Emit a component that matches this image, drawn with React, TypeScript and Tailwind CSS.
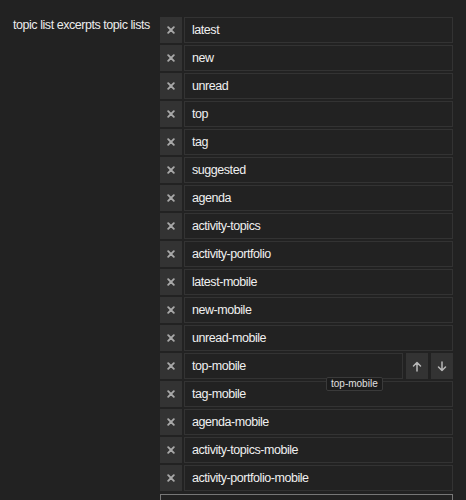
import React from "react";

const items = [
  "latest",
  "new",
  "unread",
  "top",
  "tag",
  "suggested",
  "agenda",
  "activity-topics",
  "activity-portfolio",
  "latest-mobile",
  "new-mobile",
  "unread-mobile",
  "top-mobile",
  "tag-mobile",
  "agenda-mobile",
  "activity-topics-mobile",
  "activity-portfolio-mobile",
];

function XIcon() {
  return (
    <svg width="8" height="8" viewBox="0 0 8 8">
      <path d="M1.2 1.2 L6.8 6.8 M6.8 1.2 L1.2 6.8" stroke="#a8a8a8" strokeWidth="1.9" strokeLinecap="round" />
    </svg>
  );
}

function Arrow({ up }: { up: boolean }) {
  return (
    <svg width="10" height="11" viewBox="0 0 10 11">
      {up ? (
        <path d="M5 10 V1.5 M1.5 5 L5 1.5 L8.5 5" stroke="#b8b8b8" strokeWidth="1.5" fill="none" strokeLinecap="round" strokeLinejoin="round" />
      ) : (
        <path d="M5 1 V9.5 M1.5 6 L5 9.5 L8.5 6" stroke="#b8b8b8" strokeWidth="1.5" fill="none" strokeLinecap="round" strokeLinejoin="round" />
      )}
    </svg>
  );
}

export default function App() {
  return (
    <div
      className="w-[466px] h-[500px] overflow-hidden bg-[#222222] text-[#dddddd] flex pt-[17px] pl-[13px] pr-[13px]"
      style={{ fontFamily: '"Liberation Sans", Arial, sans-serif' }}
    >
      <div className="w-[147px] shrink-0 text-[12.5px] leading-[15px] tracking-[-0.45px] whitespace-nowrap pt-[1px] text-[#ececec]">
        topic list excerpts topic lists
      </div>
      <div className="flex-1 flex flex-col gap-[2px]">
        {items.map((it) => (
          <div key={it} className="relative flex gap-[2px] h-[26px]">
            <div className="w-[22px] h-[26px] bg-[#333333] flex items-center justify-center shrink-0">
              <XIcon />
            </div>
            <div className="flex-1 h-[26px] border border-[#333333] bg-[#222222] flex items-center pl-[7px] text-[12.5px] tracking-[-0.45px] text-[#f0f0f0]">
              {it}
            </div>
            {it === "top-mobile" && (
              <>
                <div className="w-[22px] h-[26px] bg-[#333333] flex items-center justify-center shrink-0 ml-[1px]">
                  <Arrow up />
                </div>
                <div className="w-[22px] h-[26px] bg-[#333333] flex items-center justify-center shrink-0 ml-[1px]">
                  <Arrow up={false} />
                </div>
                <div className="absolute left-[166px] top-[24px] h-[14px] px-[4px] bg-[#1c1c1c] border border-[#3a3a3a] rounded-[2px] text-[10px] leading-[12px] text-[#e0e0e0] z-10">
                  top-mobile
                </div>
              </>
            )}
          </div>
        ))}
        <div className="h-[26px] mt-[1px] border border-[#777777] bg-[#222222] shrink-0"></div>
      </div>
    </div>
  );
}
